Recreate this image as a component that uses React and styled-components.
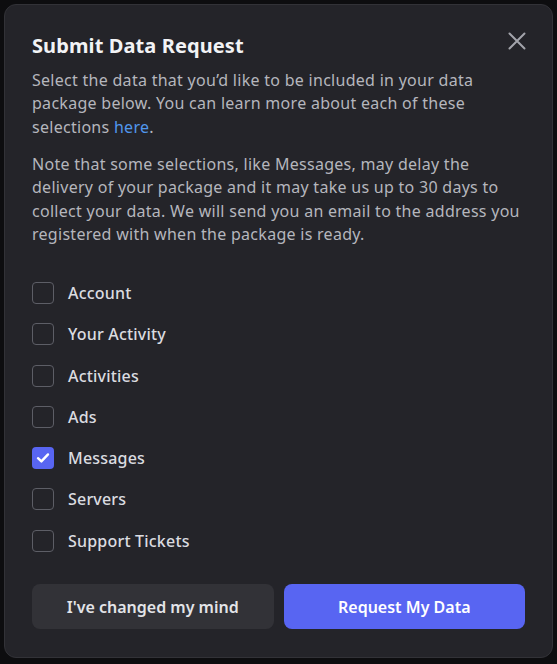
import React, { useState } from 'react';
import styled, { createGlobalStyle } from 'styled-components';

const GlobalStyle = createGlobalStyle`
  html, body {
    margin: 0;
    padding: 0;
    background: #0d0d0f;
  }
  body {
    font-family: "Noto Sans", "Open Sans", sans-serif;
    -webkit-font-smoothing: antialiased;
  }
`;

const Page = styled.div`
  width: 557px;
  height: 664px;
  padding: 4px 4px 5px 4px;
  box-sizing: border-box;
  background: #0d0d0f;
`;

const Modal = styled.div`
  position: relative;
  width: 549px;
  height: 654px;
  box-sizing: border-box;
  background: #242429;
  border: 1px solid #323237;
  border-radius: 12px;
  padding: 27px 27px 0 27px;
  display: flex;
  flex-direction: column;
`;

const CloseButton = styled.button`
  position: absolute;
  top: 20px;
  right: 19px;
  width: 32px;
  height: 32px;
  border: none;
  background: transparent;
  padding: 0;
  display: flex;
  align-items: center;
  justify-content: center;
  cursor: pointer;
`;

const Title = styled.h1`
  margin: 0;
  font-size: 20px;
  line-height: 28px;
  font-weight: 700;
  color: #f2f3f5;
  letter-spacing: 0.1px;
`;

const Paragraph = styled.p`
  margin: ${props => (props.first ? '9px 0 0' : '14px 0 0')};
  font-size: 16px;
  line-height: 23.33px;
  letter-spacing: 0.28px;
  color: #b5b6bd;
`;

const TextLink = styled.a`
  color: #5197ed;
  text-decoration: none;
  cursor: pointer;
`;

const OptionList = styled.div`
  display: flex;
  flex-direction: column;
  margin-top: 26px;
`;

const OptionRow = styled.label`
  display: flex;
  align-items: center;
  gap: 14px;
  height: 41.3px;
  cursor: pointer;
`;

const Box = styled.span`
  width: 22px;
  height: 22px;
  box-sizing: border-box;
  border-radius: 4px;
  border: ${props => (props.checked ? 'none' : '1px solid #5d5e66')};
  background: ${props => (props.checked ? '#5865f2' : 'transparent')};
  display: flex;
  align-items: center;
  justify-content: center;
  flex-shrink: 0;
`;

const OptionLabel = styled.span`
  font-size: 16px;
  color: #dbdce0;
  font-weight: 500;
  letter-spacing: 0.2px;
`;

const Footer = styled.div`
  display: grid;
  grid-template-columns: 1fr 1fr;
  gap: 10px;
  margin-top: auto;
  margin-bottom: 28px;
`;

const Button = styled.button`
  height: 45px;
  border: none;
  border-radius: 8px;
  font-family: inherit;
  font-size: 16px;
  font-weight: 600;
  cursor: pointer;
  background: ${props => (props.primary ? '#5865f2' : '#323237')};
  color: ${props => (props.primary ? '#ffffff' : '#e3e4e8')};
`;

const options = [
  'Account',
  'Your Activity',
  'Activities',
  'Ads',
  'Messages',
  'Servers',
  'Support Tickets',
];

export default function App() {
  const [selected, setSelected] = useState({ Messages: true });

  const toggle = name => setSelected(s => ({ ...s, [name]: !s[name] }));

  return (
    <Page>
      <GlobalStyle />
      <Modal>
        <CloseButton aria-label="Close">
          <svg width="18" height="18" viewBox="0 0 18 18">
            <path d="M1.5 1.5 L16.5 16.5 M16.5 1.5 L1.5 16.5" stroke="#a3a4ab" strokeWidth="2" strokeLinecap="round" />
          </svg>
        </CloseButton>
        <Title>Submit Data Request</Title>
        <Paragraph first>
          Select the data that you’d like to be included in your data package below. You can learn more about each of these selections <TextLink>here</TextLink>.
        </Paragraph>
        <Paragraph>
          Note that some selections, like Messages, may delay the delivery of your package and it may take us up to 30 days to collect your data. We will send you an email to the address you registered with when the package is ready.
        </Paragraph>
        <OptionList>
          {options.map(name => (
            <OptionRow key={name} onClick={() => toggle(name)}>
              <Box checked={!!selected[name]}>
                {selected[name] && (
                  <svg width="16" height="16" viewBox="0 0 16 16">
                    <path d="M3 8.2 L6.4 11.4 L13 4.4" fill="none" stroke="#ffffff" strokeWidth="2.4" strokeLinecap="round" strokeLinejoin="round" />
                  </svg>
                )}
              </Box>
              <OptionLabel>{name}</OptionLabel>
            </OptionRow>
          ))}
        </OptionList>
        <Footer>
          <Button>I've changed my mind</Button>
          <Button primary>Request My Data</Button>
        </Footer>
      </Modal>
    </Page>
  );
}
